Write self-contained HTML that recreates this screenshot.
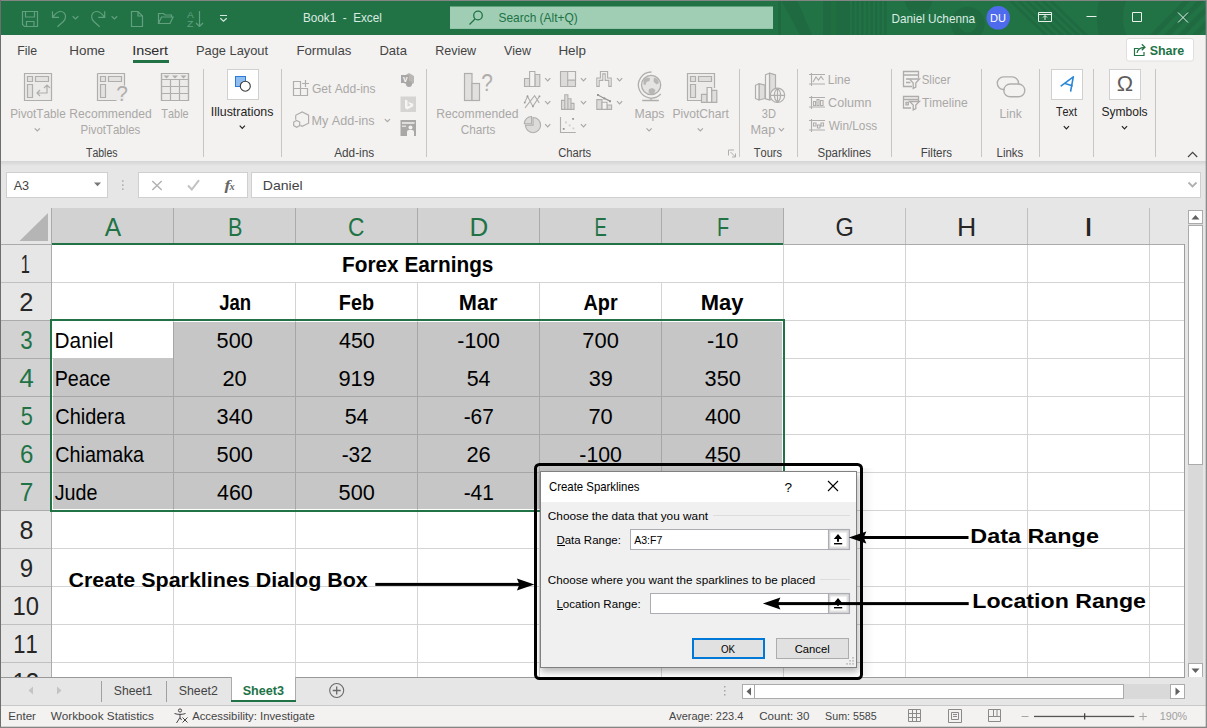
<!DOCTYPE html>
<html lang="en"><head><meta charset="utf-8"><title>Book1 - Excel</title>
<style>
html,body{margin:0;padding:0;background:#e6e6e6;overflow:hidden}
body{width:1207px;height:728px;position:relative;font-family:'Liberation Sans', 'DejaVu Sans', sans-serif}
svg{position:absolute;left:0;top:0;display:block;font-family:'Liberation Sans', 'DejaVu Sans', sans-serif}
text{white-space:pre;font-kerning:none}
</style></head><body>
<svg width="1207" height="728" viewBox="0 0 1207 728">
<rect x="0" y="0" width="1207" height="728" fill="#e6e6e6" />
<rect x="0" y="0" width="1207" height="35" fill="#217346" />
<clipPath id="tc"><rect x="0" y="0" width="1207" height="35"/></clipPath>
<g clip-path="url(#tc)" fill="#1f6a41" stroke="none">
<rect x="778" y="0" width="3" height="35" fill="#1f6a41" />
<path d="M781 0h16l15 35h-12z" />
<rect x="823" y="0" width="27" height="35" fill="#1f6a41" />
<rect x="831" y="0" width="5" height="35" fill="#20703f" />
<rect x="852.0" y="0" width="2.4" height="35" fill="#1f6a41" />
<rect x="856.6" y="0" width="2.4" height="35" fill="#1f6a41" />
<rect x="861.2" y="0" width="2.4" height="35" fill="#1f6a41" />
<rect x="865.8" y="0" width="2.4" height="35" fill="#1f6a41" />
<rect x="870.4" y="0" width="2.4" height="35" fill="#1f6a41" />
<rect x="875.0" y="0" width="2.4" height="35" fill="#1f6a41" />
<rect x="879.6" y="0" width="2.4" height="35" fill="#1f6a41" />
<rect x="884.2" y="0" width="2.4" height="35" fill="#1f6a41" />
<circle cx="918.6" cy="0" r="13.7"/>
<circle cx="967.8" cy="23.7" r="13" fill="none" stroke="#1f6a41" stroke-width="8"/>
<path d="M1008 0h4l36 35h-4z" />
<path d="M1016 0h4l36 35h-4z" />
<path d="M1024 0h4l36 35h-4z" />
<path d="M1032 0h4l36 35h-4z" />
<path d="M1040 0h4l36 35h-4z" />
<path d="M1048 0h4l36 35h-4z" />
<circle cx="1168" cy="18" r="58" fill="none" stroke="#1f6a41" stroke-width="26"/>
<path d="M1150 35h7l34-35h-7z" fill="#1f6a41" />
<path d="M1164 35h7l34-35h-7z" fill="#1f6a41" />
<path d="M1178 35h7l34-35h-7z" fill="#1f6a41" />
<path d="M1192 35h7l34-35h-7z" fill="#1f6a41" />
<path d="M1206 35h7l34-35h-7z" fill="#1f6a41" />
</g>
<rect x="0" y="35" width="1207" height="126" fill="#f3f2f1" />
<defs><linearGradient id="rs" x1="0" y1="0" x2="0" y2="1"><stop offset="0" stop-color="#d4d4d4"/><stop offset="1" stop-color="#e6e6e6"/></linearGradient></defs>
<rect x="0" y="161" width="1207" height="5" fill="url(#rs)" />
<g fill="none" stroke="#62a07e" stroke-width="1.2">
<path d="M22.5 11.5h15v15h-13l-2-2z M25.5 11.5v5.5h9v-5.5 M26.5 26.5v-5h7.5v5" />
<path d="M52.5 11.2v6.2h6.5 M52.8 17.2c2.3-3.4 5.2-5.7 7.9-5.7a4.9 4.9 0 0 1 4.8 5.4c0 1.9-0.9 3.4-2.4 4.8l-5.6 5" />
<path d="M72.7 16.3l2.8 2.7 2.8-2.7" />
<path d="M104.7 11.2v6.2h-6.5 M104.4 17.2c-2.3-3.4-5.2-5.7-7.9-5.7a4.9 4.9 0 0 0 -4.8 5.4c0 1.9 0.9 3.4 2.4 4.8l5.6 5" />
<path d="M111.6 16.3l2.8 2.7 2.8-2.7" />
<path d="M131.5 11.5h6.5l4.5 4.5v10.5h-11z M138 11.5v4.5h4.5" />
<path d="M158.5 23.5v-10h5l1.5 1.5h6.5v2.5 M158.5 23.5l3-6.5h11.5l-3 6.5z" />
<path d="M199.5 11v15.5 M196 23l3.5 3.5 3.5-3.5" />
</g>
<text x="187.08" y="17.7" font-size="9.4" fill="#62a07e" textLength="6.74" lengthAdjust="spacingAndGlyphs" >A</text>
<text x="186.97" y="26.8" font-size="9.4" fill="#62a07e" textLength="6.36" lengthAdjust="spacingAndGlyphs" >Z</text>
<g fill="none" stroke="#d5e8dd" stroke-width="1.2">
<path d="M220 15.5h7 M220.3 18.3l3.2 2.9 3.2-2.9" />
</g>
<text x="303.04" y="22" font-size="13" fill="#dcebe2" textLength="78.74" lengthAdjust="spacingAndGlyphs" >Book1  -  Excel</text>
<rect x="450" y="6.5" width="323" height="22.4" fill="#9fceb4" />
<g fill="none" stroke="#217346" stroke-width="1.3">
<circle cx="478" cy="15.5" r="4.3"/>
<path d="M475 19l-5.5 5.5" />
</g>
<text x="498.46" y="22" font-size="13" fill="#217346" textLength="79.28" lengthAdjust="spacingAndGlyphs" >Search (Alt+Q)</text>
<text x="891.54" y="22.5" font-size="13" fill="#dcebe2" textLength="83.46" lengthAdjust="spacingAndGlyphs" >Daniel Uchenna</text>
<circle cx="998.2" cy="17.8" r="11.8" fill="#4f6bed"/>
<text x="990.09" y="22" font-size="10.6" fill="#ffffff" textLength="15.96" lengthAdjust="spacingAndGlyphs" >DU</text>
<g fill="none" stroke="#fff" stroke-width="1" opacity="0.9">
<path d="M1038.5 12.5h13v9h-13z M1038.5 14.5h13 M1045 20v-4 M1043 17.5l2-2 2 2" />
<path d="M1086.5 16.5h10" />
<path d="M1132.5 12.5h9v9h-9z" />
<path d="M1178 12.5l10 10 M1188 12.5l-10 10" />
</g>
<text x="17.19" y="55" font-size="12.9" fill="#444444" textLength="19.86" lengthAdjust="spacingAndGlyphs" >File</text>
<text x="69.2" y="55" font-size="12.9" fill="#444444" textLength="35.9" lengthAdjust="spacingAndGlyphs" >Home</text>
<text x="132.17" y="55" font-size="12.9" fill="#2b2b2b" textLength="35.93" lengthAdjust="spacingAndGlyphs" >Insert</text>
<text x="195.95" y="55" font-size="12.9" fill="#444444" textLength="72.15" lengthAdjust="spacingAndGlyphs" >Page Layout</text>
<text x="296.42" y="55" font-size="12.9" fill="#444444" textLength="55.06" lengthAdjust="spacingAndGlyphs" >Formulas</text>
<text x="379.43" y="55" font-size="12.9" fill="#444444" textLength="27.57" lengthAdjust="spacingAndGlyphs" >Data</text>
<text x="435.17" y="55" font-size="12.9" fill="#444444" textLength="41.0" lengthAdjust="spacingAndGlyphs" >Review</text>
<text x="503.95" y="55" font-size="12.9" fill="#444444" textLength="27.02" lengthAdjust="spacingAndGlyphs" >View</text>
<text x="558.4" y="55" font-size="12.9" fill="#444444" textLength="27.67" lengthAdjust="spacingAndGlyphs" >Help</text>
<rect x="133" y="60" width="36" height="3" fill="#217346" />
<rect x="1126.5" y="38.5" width="67" height="22.5" fill="#fff" stroke="#e1dfdd" stroke-width="1" rx="2.5" />
<g fill="none" stroke="#217346" stroke-width="1.2">
<path d="M1138.5 48.5h-4v7h9.5v-3.5 M1137 53c0.5-3.5 3-5.5 7.5-5.7 M1141.8 44.3l3.2 3-3.2 3" />
</g>
<text x="1149.64" y="55.1" font-size="13.2" fill="#217346" font-weight="700" textLength="34.58" lengthAdjust="spacingAndGlyphs" >Share</text>
<rect x="203" y="69" width="1" height="88" fill="#c8c6c4" />
<rect x="281" y="69" width="1" height="88" fill="#c8c6c4" />
<rect x="426" y="69" width="1" height="88" fill="#c8c6c4" />
<rect x="739" y="69" width="1" height="88" fill="#c8c6c4" />
<rect x="797" y="69" width="1" height="88" fill="#c8c6c4" />
<rect x="891" y="69" width="1" height="88" fill="#c8c6c4" />
<rect x="981" y="69" width="1" height="88" fill="#c8c6c4" />
<rect x="1039" y="69" width="1" height="88" fill="#c8c6c4" />
<rect x="1093" y="69" width="1" height="88" fill="#c8c6c4" />
<rect x="1155" y="69" width="1" height="88" fill="#c8c6c4" />
<text x="85.96" y="157" font-size="12.3" fill="#444444" textLength="31.62" lengthAdjust="spacingAndGlyphs" >Tables</text>
<text x="334.18" y="157" font-size="12.3" fill="#444444" textLength="39.95" lengthAdjust="spacingAndGlyphs" >Add-ins</text>
<text x="558.13" y="157" font-size="12.3" fill="#444444" textLength="32.97" lengthAdjust="spacingAndGlyphs" >Charts</text>
<text x="753.75" y="157" font-size="12.3" fill="#444444" textLength="28.25" lengthAdjust="spacingAndGlyphs" >Tours</text>
<text x="817.48" y="157" font-size="12.3" fill="#444444" textLength="53.64" lengthAdjust="spacingAndGlyphs" >Sparklines</text>
<text x="920.75" y="157" font-size="12.3" fill="#444444" textLength="31.36" lengthAdjust="spacingAndGlyphs" >Filters</text>
<text x="996.56" y="157" font-size="12.3" fill="#444444" textLength="26.65" lengthAdjust="spacingAndGlyphs" >Links</text>
<text x="10.24" y="117.7" font-size="12.1" fill="#aaa8a6" textLength="55.49" lengthAdjust="spacingAndGlyphs" >PivotTable</text>
<path d="M34.699999999999996 128.29999999999998l2.6 2.6 2.6 -2.6" stroke="#aaa8a6" fill="none" stroke-width="1.2" />
<text x="69.3" y="117.7" font-size="12.1" fill="#aaa8a6" textLength="82.38" lengthAdjust="spacingAndGlyphs" >Recommended</text>
<text x="80.56" y="133.5" font-size="12.1" fill="#aaa8a6" textLength="59.75" lengthAdjust="spacingAndGlyphs" >PivotTables</text>
<text x="161.35" y="117.7" font-size="12.1" fill="#aaa8a6" textLength="27.33" lengthAdjust="spacingAndGlyphs" >Table</text>
<g fill="none" stroke="#b0aeac" stroke-width="1.2">
<path d="M24.5 73.5h27v27h-27z" fill="#ecebea" />
<path d="M27.5 76.5h5v5h-5z M35.5 76.5h13v5h-13z M27.5 84.5h5v13h-5z" fill="#e4e2e0" />
<path d="M47 85v8h-10 M40 90l-3 3 3 3 M44 88l3-3 3 3" />
<path d="M97.5 73.5h27v27h-27z" stroke="none" fill="#ecebea" />
<path d="M97.5 73.5h27v12 M97.5 73.5v27h19" />
<path d="M100.5 76.5h5v5h-5z M108.5 76.5h13v5h-13z M100.5 84.5h5v13h-5z" fill="#e4e2e0" />
<path d="M161.5 73.5h27v27h-27z" fill="#ecebea" />
<path d="M161.5 73.5h27v27h-27z M161.5 79.5h27 M161.5 86.5h27 M161.5 93.5h27 M170.5 79.5v21 M179.5 79.5v21" />
</g>
<path d="M163.5 75.5h6l-3 3z M172 75.5h6l-3 3z M180.5 75.5h6l-3 3z" fill="#b0aeac" />
<text x="116.14" y="101" font-size="22" fill="#b0aeac" textLength="11.63" lengthAdjust="spacingAndGlyphs" >?</text>
<rect x="227.5" y="69.5" width="31" height="30" fill="#ffffff" stroke="#d2d0ce" stroke-width="1" />
<rect x="235.5" y="76.5" width="10" height="10" fill="#8fbdf0" stroke="#2b7bd6" stroke-width="1" />
<circle cx="245.3" cy="86.2" r="5" fill="#fff" stroke="#3b3a39" stroke-width="1.1"/>
<text x="210.86" y="116" font-size="12.1" fill="#252423" textLength="62.59" lengthAdjust="spacingAndGlyphs" >Illustrations</text>
<path d="M239.70000000000002 125.7l2.6 2.6 2.6 -2.6" stroke="#252423" fill="none" stroke-width="1.2" />
<g fill="none" stroke="#b0aeac" stroke-width="1.2">
<path d="M293.5 81.5h7v7h7v7h-14z M300.5 88.5v7 M293.5 88.5h7 M305.5 80v7 M302 83.5h7" />
<path d="M295.7 115.2l6.5-3.2 6.4 3.2v8l-6.4 3.1-1.8-0.9 M295.7 115.2v4.6" />
<path d="M296.7 120.4l3 1.7v3.5l-3 1.7-3-1.7v-3.5z" />
</g>
<text x="311.89" y="92.7" font-size="12.1" fill="#aaa8a6" textLength="63.74" lengthAdjust="spacingAndGlyphs" >Get Add-ins</text>
<text x="311.46" y="124.8" font-size="12.1" fill="#aaa8a6" textLength="63.19" lengthAdjust="spacingAndGlyphs" >My Add-ins</text>
<path d="M384.79999999999995 119.10000000000001l2.6 2.6 2.6 -2.6" stroke="#aaa8a6" fill="none" stroke-width="1.2" />
<path d="M404 76l5-3 5 3v7l-5 3-5-3z" fill="#b9b7b5" />
<circle cx="409" cy="84" r="3" fill="#a9a7a5"/>
<rect x="401" y="75" width="8" height="8" fill="#a9a7a5" />
<text x="402.95" y="82" font-size="7" fill="#fff" font-weight="700" textLength="4.59" lengthAdjust="spacingAndGlyphs" >V</text>
<rect x="400.5" y="96.5" width="15.5" height="15.5" fill="#d6d4d2" />
<path d="M405 99.5l2.5 1v6l3.5-1.5-2-1 -0.8-2 5 1.8v2.5l-6 3.2-2.2-1.5z" fill="#f6f5f4" />
<rect x="400.5" y="120" width="15.5" height="16" fill="#aaa8a6" />
<rect x="402" y="122" width="12.5" height="2" fill="#e0dedc" />
<rect x="402" y="125.5" width="4" height="1.5" fill="#e0dedc" />
<circle cx="410.5" cy="127.5" r="2" fill="#f3f2f1"/>
<path d="M407 136v-4a2 2 0 0 1 2-2h3a2 2 0 0 1 2 2v4z" fill="#f3f2f1" />
<rect x="464.5" y="73.5" width="7.5" height="27" fill="#e2e0de" stroke="#b0aeac" stroke-width="1.2" />
<rect x="472" y="83.5" width="7.5" height="17" fill="#e2e0de" stroke="#b0aeac" stroke-width="1.2" />
<text x="481.14" y="91" font-size="24" fill="#b0aeac" textLength="11.63" lengthAdjust="spacingAndGlyphs" >?</text>
<text x="436.31" y="117.7" font-size="12.1" fill="#aaa8a6" textLength="82.07" lengthAdjust="spacingAndGlyphs" >Recommended</text>
<text x="460.8" y="133.5" font-size="12.1" fill="#aaa8a6" textLength="34.62" lengthAdjust="spacingAndGlyphs" >Charts</text>
<g fill="#dddbd9" stroke="#b0aeac" stroke-width="1.1">
<path d="M524.5 86.5v-8h5v8z M534.9 86.5v-12h4.9v12z" />
<path d="M529.6 86.5v-15h5.3v15z" fill="#f3f2f1" />
<path d="M525 107.8L534.6 95.6L539.2 102.9 M524.7 102.6L527.5 96.3L532.9 106.4L539.5 96.3" fill="none" />
<path d="M533 117.5a7.6 7.6 0 1 1 -7.6 7.6h7.6z" />
<path d="M531.6 123.8h-7.3a7.4 7.4 0 0 1 7.3-7.3z" />
<path d="M560.5 71.5h15v15h-15z" />
<path d="M567.7 71.5h7.8v8.6h-7.8z" fill="#efedeb" />
<path d="M567.7 80v6.5" fill="none" />
<path d="M561.5 109.4v-9h3.3v9z M564.8 109.4v-14.6h3.1v14.6z M567.9 109.4v-10.7h3.1v10.7z M571 109.4v-6h3v6z" />
<path d="M560.5 117v15.5h15.3" fill="none" />
<path d="M596.8 86.4v-8.4h3.6v-6.5h7.2v6.5h3.6v8.4h-2.4v-6h-3.6v-6.5h-2.4v6.5h-3.6v6z" fill="#efedeb" />
<path d="M596.8 109.4v-9.8h5.2v9.8z M607 109.4v-4.4h4.6v4.4z" />
<path d="M602 109.4v-7.2h5v7.2z" fill="#f3f2f1" />
<path d="M598 95l6 3.2 6 3" stroke="#9a9896" fill="none" stroke-width="1.3" />
</g>
<rect x="572.2" y="118" width="1.8" height="1.8" fill="#9a9896" />
<rect x="562.8" y="128" width="1.8" height="1.8" fill="#9a9896" />
<rect x="565" y="121.5" width="1.8" height="1.8" fill="#d0cecc" />
<rect x="568.8" y="124.5" width="1.8" height="1.8" fill="#d0cecc" />
<rect x="572.5" y="127.5" width="1.8" height="1.8" fill="#d0cecc" />
<rect x="597" y="94" width="2" height="2" fill="#9a9896" />
<rect x="603.2" y="97.4" width="2" height="2" fill="#9a9896" />
<rect x="609" y="100.2" width="2" height="2" fill="#9a9896" />
<rect x="523.9" y="101.8" width="1.6" height="1.6" fill="#9a9896" />
<rect x="526.7" y="95.5" width="1.6" height="1.6" fill="#9a9896" />
<rect x="532.1" y="105.6" width="1.6" height="1.6" fill="#9a9896" />
<rect x="538.7" y="95.5" width="1.6" height="1.6" fill="#9a9896" />
<path d="M545.1 78.2l2.6 2.6 2.6 -2.6" stroke="#aaa8a6" fill="none" stroke-width="1.2" />
<path d="M545.1 101.2l2.6 2.6 2.6 -2.6" stroke="#aaa8a6" fill="none" stroke-width="1.2" />
<path d="M545.1 124.2l2.6 2.6 2.6 -2.6" stroke="#aaa8a6" fill="none" stroke-width="1.2" />
<path d="M580.9 78.2l2.6 2.6 2.6 -2.6" stroke="#aaa8a6" fill="none" stroke-width="1.2" />
<path d="M580.9 101.2l2.6 2.6 2.6 -2.6" stroke="#aaa8a6" fill="none" stroke-width="1.2" />
<path d="M580.9 124.2l2.6 2.6 2.6 -2.6" stroke="#aaa8a6" fill="none" stroke-width="1.2" />
<path d="M617.0 78.2l2.6 2.6 2.6 -2.6" stroke="#aaa8a6" fill="none" stroke-width="1.2" />
<path d="M617.0 101.2l2.6 2.6 2.6 -2.6" stroke="#aaa8a6" fill="none" stroke-width="1.2" />
<g fill="none" stroke="#b0aeac" stroke-width="1.3">
<circle cx="651.1" cy="85" r="9.6" fill="#e6e4e2"/>
<path d="M651.5 72a13 13 0 1 0 9.3 22 M651 97.5v3 M642.2 100.5h16.6" />
</g>
<path d="M643.5 80l3-2.5 3.5 0.5-0.5 3-3 1-1 3-2-0.5z M649 89l3.5-1 3 2-1.5 4-3.5 0.5-2-2.5z M654 77.5l3.5 1.5 1.5 4-2.5 1.5-3-3z" fill="#b9b7b5" />
<text x="634.5" y="117.7" font-size="12.1" fill="#aaa8a6" textLength="29.95" lengthAdjust="spacingAndGlyphs" >Maps</text>
<path d="M646.5 128.29999999999998l2.6 2.6 2.6 -2.6" stroke="#aaa8a6" fill="none" stroke-width="1.2" />
<g fill="none" stroke="#b0aeac" stroke-width="1.2">
<path d="M714.5 73.5h-27v27h27z" stroke="none" fill="#ecebea" />
<path d="M714.5 88v-14.5h-27v27h13.5" />
<path d="M690.5 76.5h5v5h-5z M698.5 76.5h13v5h-13z M690.5 84.5h5v13h-5z" fill="#e0dedc" />
<path d="M701.5 102.3v-8h5.6v8z M711.6 102.3v-12h5.2v12z" fill="#e0dedc" />
<path d="M707.1 102.3v-14.8h4.5v14.8z" fill="#f3f2f1" />
</g>
<text x="672.51" y="117.7" font-size="12.1" fill="#aaa8a6" textLength="56.28" lengthAdjust="spacingAndGlyphs" >PivotChart</text>
<path d="M697.6999999999999 128.29999999999998l2.6 2.6 2.6 -2.6" stroke="#aaa8a6" fill="none" stroke-width="1.2" />
<path d="M728.5 155.5v-5.5h5.5 M730.5 152l5 5 M735.5 153.5v3.5h-3.5" stroke="#b0aeac" fill="none" stroke-width="1" />
<g fill="#e0dedc" stroke="#b0aeac" stroke-width="1.2" stroke-linejoin="round">
<path d="M759 83.7L765 85.2V98.5L759 100Z" />
<path d="M755.5 85.2L759 83.7V100L755.5 98.5Z" fill="#f3f2f1" />
<path d="M769.5 73.2L775.5 74.8V99L769.5 99.8Z" />
<path d="M765.5 74.8L769.5 73.2V99.8L765.5 98.8Z" fill="#f3f2f1" />
<circle cx="777.5" cy="95.3" r="7.2" fill="#f3f2f1"/>
<path d="M770.3 95.3h14.4 M777.5 88.1v14.4 M777.5 88.1c-4.2 4-4.2 10.4 0 14.4 M777.5 88.1c4.2 4 4.2 10.4 0 14.4" fill="none" />
</g>
<text x="761.78" y="117.7" font-size="12.1" fill="#aaa8a6" textLength="14.15" lengthAdjust="spacingAndGlyphs" >3D</text>
<text x="750.46" y="133.5" font-size="12.1" fill="#aaa8a6" textLength="24.78" lengthAdjust="spacingAndGlyphs" >Map</text>
<path d="M778.8 128.2l2.6 2.6 2.6 -2.6" stroke="#aaa8a6" fill="none" stroke-width="1.2" />
<g fill="none" stroke="#b0aeac" stroke-width="1.1">
<path d="M811.5 73v13 M809 74.5h16 M809 84h16" />
<path d="M811.5 96v13 M809 97.5h16 M809 107h16" />
<path d="M811.5 119v13 M809 120.5h16 M809 130h16" />
<path d="M813 82l3-5 2.5 3 2.5-3.5 2.5 3.5" />
<path d="M813.5 105.5v-4h2v4z M817 105.5v-6h2v6z M820.5 105.5v-5h2.5v5z" />
<path d="M813.5 126v-3h2.5v3z M817.5 128v-3h2.5v3z M821 126v-3h2.5v3z" />
</g>
<text x="827.7" y="83.8" font-size="12.1" fill="#aaa8a6" textLength="22.93" lengthAdjust="spacingAndGlyphs" >Line</text>
<text x="828.06" y="106.6" font-size="12.1" fill="#aaa8a6" textLength="43.36" lengthAdjust="spacingAndGlyphs" >Column</text>
<text x="828.65" y="129.6" font-size="12.1" fill="#aaa8a6" textLength="48.58" lengthAdjust="spacingAndGlyphs" >Win/Loss</text>
<g fill="none" stroke="#aeacaa" stroke-width="1.3">
<path d="M903.5 71.5h15v3.5h-15z M903.5 75v11.5h8.5 M918.5 75v3" />
<path d="M909.5 79h10l-3.7 4v4.2l-2.6 1.2v-5.4z" fill="#f3f2f1" />
<path d="M906 79h3 M906 82.5h4.5" />
<path d="M903.5 96.5h15v3h-15z M903.5 99.5v8.5h7.5 M918.5 99.5v2" />
<path d="M909.5 101.5h10l-3.7 3.6v3.6l-2.6 1.2v-4.8z" fill="#f3f2f1" />
<path d="M906 102.5h2.3v2.3h-2.3z" />
</g>
<text x="921.68" y="83.8" font-size="12.1" fill="#aaa8a6" textLength="28.81" lengthAdjust="spacingAndGlyphs" >Slicer</text>
<text x="921.93" y="106.6" font-size="12.1" fill="#aaa8a6" textLength="45.81" lengthAdjust="spacingAndGlyphs" >Timeline</text>
<g fill="none" stroke="#b0aeac" stroke-width="1.4">
<path d="M1003.6 89.5A6.3 6.3 0 0 1 1003.6 76.9H1012.2A6.3 6.3 0 0 1 1018.5 83.2V84.5 M1003.6 89.5h1.2" />
<path d="M1018.4 84H1010.2A6.4 6.4 0 0 0 1010.2 96.8H1018.4A6.4 6.4 0 0 0 1018.4 84" />
</g>
<text x="999.5" y="117.7" font-size="12.1" fill="#aaa8a6" textLength="22.28" lengthAdjust="spacingAndGlyphs" >Link</text>
<rect x="1051.5" y="69.5" width="31" height="30" fill="#ffffff" stroke="#d2d0ce" stroke-width="1" />
<path d="M1061.2 85.8L1073.3 76.8L1070.7 91 M1065 83.5l7.2 2.2" stroke="#2b88d8" fill="none" stroke-width="1.6" stroke-linecap="round" stroke-linejoin="round"/>
<text x="1055.96" y="115.6" font-size="12.1" fill="#252423" textLength="21.12" lengthAdjust="spacingAndGlyphs" >Text</text>
<path d="M1063.8000000000002 126.2l2.6 2.6 2.6 -2.6" stroke="#252423" fill="none" stroke-width="1.2" />
<rect x="1109.5" y="69.5" width="31" height="30" fill="#ffffff" stroke="#d2d0ce" stroke-width="1" />
<text x="1116.77" y="90.9" font-size="21.2" fill="#605e5c" textLength="16.37" lengthAdjust="spacingAndGlyphs" >Ω</text>
<text x="1101.45" y="115.6" font-size="12.1" fill="#252423" textLength="46.18" lengthAdjust="spacingAndGlyphs" >Symbols</text>
<path d="M1121.9 126.2l2.6 2.6 2.6 -2.6" stroke="#252423" fill="none" stroke-width="1.2" />
<path d="M1188 157l4.6-4.6 4.6 4.6" stroke="#444" fill="none" stroke-width="1.2" />
<rect x="6.5" y="172.5" width="101" height="25" fill="#ffffff" stroke="#cfcfcf" stroke-width="1" />
<text x="13.68" y="189.8" font-size="12.9" fill="#444" textLength="15.48" lengthAdjust="spacingAndGlyphs" >A3</text>
<path d="M94 182.5h7l-3.5 3.8z" fill="#777" />
<rect x="122" y="180.2" width="1.6" height="1.6" fill="#b0b0b0" />
<rect x="122" y="184.3" width="1.6" height="1.6" fill="#b0b0b0" />
<rect x="122" y="188.4" width="1.6" height="1.6" fill="#b0b0b0" />
<rect x="138.5" y="172.5" width="109" height="25" fill="#ffffff" stroke="#cfcfcf" stroke-width="1" />
<path d="M152.3 181l9.4 9 M161.7 181l-9.4 9" stroke="#b4b4b4" fill="none" stroke-width="1.6" />
<path d="M188 185.5l3.8 4 7.2-9.3" stroke="#c2c2c2" fill="none" stroke-width="2" />
<text x="224.5" y="189.5" font-size="15" fill="#666" font-weight="700" textLength="6" lengthAdjust="spacingAndGlyphs" font-style="italic" font-family="Liberation Serif, DejaVu Serif, serif">f</text>
<text x="229.5" y="190" font-size="9.5" fill="#666" font-weight="700" textLength="5.2" lengthAdjust="spacingAndGlyphs" font-style="italic" font-family="Liberation Serif, DejaVu Serif, serif">x</text>
<rect x="251.5" y="172.5" width="949" height="25" fill="#ffffff" stroke="#cfcfcf" stroke-width="1" />
<text x="262.75" y="189.9" font-size="12.9" fill="#444" textLength="39.9" lengthAdjust="spacingAndGlyphs" >Daniel</text>
<path d="M1188.5 182.5l4 4 4-4" stroke="#b0b0b0" fill="none" stroke-width="1.8" />
<rect x="52" y="244" width="1133" height="433" fill="#ffffff" />
<rect x="0" y="208" width="1185" height="36" fill="#e6e6e6" />
<rect x="52" y="208" width="731" height="36" fill="#d2d2d2" />
<path d="M48 213v28h-28.5z" fill="#b5b5b5" />
<rect x="0" y="244" width="51" height="433" fill="#e6e6e6" />
<rect x="0" y="321" width="51" height="189" fill="#d2d2d2" />
<rect x="52" y="282" width="1133" height="1" fill="#d4d4d4" />
<rect x="52" y="320" width="1133" height="1" fill="#d4d4d4" />
<rect x="52" y="358" width="1133" height="1" fill="#d4d4d4" />
<rect x="52" y="396" width="1133" height="1" fill="#d4d4d4" />
<rect x="52" y="434" width="1133" height="1" fill="#d4d4d4" />
<rect x="52" y="472" width="1133" height="1" fill="#d4d4d4" />
<rect x="52" y="510" width="1133" height="1" fill="#d4d4d4" />
<rect x="52" y="548" width="1133" height="1" fill="#d4d4d4" />
<rect x="52" y="586" width="1133" height="1" fill="#d4d4d4" />
<rect x="52" y="624" width="1133" height="1" fill="#d4d4d4" />
<rect x="52" y="662" width="1133" height="1" fill="#d4d4d4" />
<rect x="173" y="245" width="1" height="432" fill="#d4d4d4" />
<rect x="295" y="245" width="1" height="432" fill="#d4d4d4" />
<rect x="417" y="245" width="1" height="432" fill="#d4d4d4" />
<rect x="539" y="245" width="1" height="432" fill="#d4d4d4" />
<rect x="661" y="245" width="1" height="432" fill="#d4d4d4" />
<rect x="783" y="245" width="1" height="432" fill="#d4d4d4" />
<rect x="905" y="245" width="1" height="432" fill="#d4d4d4" />
<rect x="1027" y="245" width="1" height="432" fill="#d4d4d4" />
<rect x="1149" y="245" width="1" height="432" fill="#d4d4d4" />
<rect x="52" y="245" width="731" height="37" fill="#ffffff" />
<rect x="53" y="322" width="729" height="187" fill="#c6c6c6" />
<rect x="53" y="396" width="729" height="1" fill="#a6a6a6" />
<rect x="53" y="434" width="729" height="1" fill="#a6a6a6" />
<rect x="53" y="472" width="729" height="1" fill="#a6a6a6" />
<rect x="173" y="322" width="1" height="187" fill="#a6a6a6" />
<rect x="295" y="322" width="1" height="187" fill="#a6a6a6" />
<rect x="417" y="322" width="1" height="187" fill="#a6a6a6" />
<rect x="539" y="322" width="1" height="187" fill="#a6a6a6" />
<rect x="661" y="322" width="1" height="187" fill="#a6a6a6" />
<rect x="53" y="322" width="120" height="36" fill="#ffffff" />
<rect x="173" y="208" width="1" height="36" fill="#ababab" />
<rect x="295" y="208" width="1" height="36" fill="#ababab" />
<rect x="417" y="208" width="1" height="36" fill="#ababab" />
<rect x="539" y="208" width="1" height="36" fill="#ababab" />
<rect x="661" y="208" width="1" height="36" fill="#ababab" />
<rect x="783" y="208" width="1" height="36" fill="#ababab" />
<rect x="905" y="208" width="1" height="36" fill="#c0c0c0" />
<rect x="1027" y="208" width="1" height="36" fill="#c0c0c0" />
<rect x="1149" y="208" width="1" height="36" fill="#c0c0c0" />
<rect x="51" y="208" width="1" height="469" fill="#ababab" />
<rect x="0" y="244" width="51" height="1" fill="#c0c0c0" />
<rect x="0" y="282" width="51" height="1" fill="#c0c0c0" />
<rect x="0" y="320" width="51" height="1" fill="#ababab" />
<rect x="0" y="358" width="51" height="1" fill="#ababab" />
<rect x="0" y="396" width="51" height="1" fill="#ababab" />
<rect x="0" y="434" width="51" height="1" fill="#ababab" />
<rect x="0" y="472" width="51" height="1" fill="#ababab" />
<rect x="0" y="510" width="51" height="1" fill="#ababab" />
<rect x="0" y="548" width="51" height="1" fill="#c0c0c0" />
<rect x="0" y="586" width="51" height="1" fill="#c0c0c0" />
<rect x="0" y="624" width="51" height="1" fill="#c0c0c0" />
<rect x="0" y="662" width="51" height="1" fill="#c0c0c0" />
<rect x="0" y="244" width="1185" height="1" fill="#ababab" />
<rect x="1184" y="244" width="1" height="433" fill="#9e9e9e" />
<rect x="52" y="243" width="731" height="2" fill="#217346" />
<rect x="51" y="320" width="733" height="191" fill="none" stroke="#217346" stroke-width="2" />
<text x="104.75" y="236" font-size="26.5" fill="#217346" textLength="16.4" lengthAdjust="spacingAndGlyphs" >A</text>
<text x="228.03" y="236" font-size="26.5" fill="#217346" textLength="14.41" lengthAdjust="spacingAndGlyphs" >B</text>
<text x="347.95" y="236" font-size="26.5" fill="#217346" textLength="16.42" lengthAdjust="spacingAndGlyphs" >C</text>
<text x="469.57" y="236" font-size="26.5" fill="#217346" textLength="18.78" lengthAdjust="spacingAndGlyphs" >D</text>
<text x="594.49" y="236" font-size="26.5" fill="#217346" textLength="12.31" lengthAdjust="spacingAndGlyphs" >E</text>
<text x="716.97" y="236" font-size="26.5" fill="#217346" textLength="12.12" lengthAdjust="spacingAndGlyphs" >F</text>
<text x="835.41" y="236" font-size="26.5" fill="#262626" textLength="18.35" lengthAdjust="spacingAndGlyphs" >G</text>
<text x="957.01" y="236" font-size="26.5" fill="#262626" textLength="19.26" lengthAdjust="spacingAndGlyphs" >H</text>
<text x="1083.73" y="236" font-size="26.5" fill="#262626" textLength="9.53" lengthAdjust="spacingAndGlyphs" >I</text>
<clipPath id="gc"><rect x="0" y="245" width="1185" height="432"/></clipPath>
<g clip-path="url(#gc)">
<text x="20.65" y="273" font-size="26.5" fill="#262626" textLength="9.16" lengthAdjust="spacingAndGlyphs" >1</text>
<text x="19.32" y="311" font-size="26.5" fill="#262626" textLength="14.16" lengthAdjust="spacingAndGlyphs" >2</text>
<text x="20.25" y="349" font-size="26.5" fill="#217346" textLength="12.43" lengthAdjust="spacingAndGlyphs" >3</text>
<text x="19.2" y="387" font-size="26.5" fill="#217346" textLength="14.57" lengthAdjust="spacingAndGlyphs" >4</text>
<text x="20.73" y="425" font-size="26.5" fill="#217346" textLength="12.08" lengthAdjust="spacingAndGlyphs" >5</text>
<text x="19.88" y="463" font-size="26.5" fill="#217346" textLength="13.38" lengthAdjust="spacingAndGlyphs" >6</text>
<text x="19.65" y="501" font-size="26.5" fill="#217346" textLength="13.58" lengthAdjust="spacingAndGlyphs" >7</text>
<text x="19.52" y="539" font-size="26.5" fill="#262626" textLength="13.87" lengthAdjust="spacingAndGlyphs" >8</text>
<text x="19.77" y="577" font-size="26.5" fill="#262626" textLength="13.36" lengthAdjust="spacingAndGlyphs" >9</text>
<text x="12.49" y="615" font-size="26.5" fill="#262626" textLength="26.44" lengthAdjust="spacingAndGlyphs" >10</text>
<text x="13.23" y="653" font-size="26.5" fill="#262626" textLength="24.45" lengthAdjust="spacingAndGlyphs" >11</text>
<text x="12.47" y="691" font-size="26.5" fill="#262626" textLength="26.74" lengthAdjust="spacingAndGlyphs" >12</text>
</g>
<text x="342.01" y="272" font-size="21.3" fill="#000" font-weight="700" textLength="151.44" lengthAdjust="spacingAndGlyphs" >Forex Earnings</text>
<text x="219.17" y="310" font-size="21.3" fill="#000" font-weight="700" textLength="31.93" lengthAdjust="spacingAndGlyphs" >Jan</text>
<text x="338.82" y="310" font-size="21.3" fill="#000" font-weight="700" textLength="35.24" lengthAdjust="spacingAndGlyphs" >Feb</text>
<text x="458.74" y="310" font-size="21.3" fill="#000" font-weight="700" textLength="38.79" lengthAdjust="spacingAndGlyphs" >Mar</text>
<text x="583.56" y="310" font-size="21.3" fill="#000" font-weight="700" textLength="34.09" lengthAdjust="spacingAndGlyphs" >Apr</text>
<text x="700.68" y="310" font-size="21.3" fill="#000" font-weight="700" textLength="42.69" lengthAdjust="spacingAndGlyphs" >May</text>
<text x="54.6" y="348" font-size="21.3" fill="#000" textLength="58.89" lengthAdjust="spacingAndGlyphs" >Daniel</text>
<text x="54.68" y="386" font-size="21.3" fill="#000" textLength="55.89" lengthAdjust="spacingAndGlyphs" >Peace</text>
<text x="55.29" y="424" font-size="21.3" fill="#000" textLength="69.81" lengthAdjust="spacingAndGlyphs" >Chidera</text>
<text x="55.3" y="462" font-size="21.3" fill="#000" textLength="88.8" lengthAdjust="spacingAndGlyphs" >Chiamaka</text>
<text x="54.69" y="500" font-size="21.3" fill="#000" textLength="42.78" lengthAdjust="spacingAndGlyphs" >Jude</text>
<text x="216.58" y="348" font-size="21.3" fill="#000" textLength="36.22" lengthAdjust="spacingAndGlyphs" >500</text>
<text x="338.96" y="348" font-size="21.3" fill="#000" textLength="35.83" lengthAdjust="spacingAndGlyphs" >450</text>
<text x="457.35" y="348" font-size="21.3" fill="#000" textLength="42.58" lengthAdjust="spacingAndGlyphs" >-100</text>
<text x="582.33" y="348" font-size="21.3" fill="#000" textLength="36.47" lengthAdjust="spacingAndGlyphs" >700</text>
<text x="706.93" y="348" font-size="21.3" fill="#000" textLength="31.41" lengthAdjust="spacingAndGlyphs" >-10</text>
<text x="222.45" y="386" font-size="21.3" fill="#000" textLength="24.25" lengthAdjust="spacingAndGlyphs" >20</text>
<text x="338.42" y="386" font-size="21.3" fill="#000" textLength="36.57" lengthAdjust="spacingAndGlyphs" >919</text>
<text x="466.69" y="386" font-size="21.3" fill="#000" textLength="23.78" lengthAdjust="spacingAndGlyphs" >54</text>
<text x="588.72" y="386" font-size="21.3" fill="#000" textLength="24.16" lengthAdjust="spacingAndGlyphs" >39</text>
<text x="704.62" y="386" font-size="21.3" fill="#000" textLength="36.17" lengthAdjust="spacingAndGlyphs" >350</text>
<text x="216.62" y="424" font-size="21.3" fill="#000" textLength="36.17" lengthAdjust="spacingAndGlyphs" >340</text>
<text x="344.69" y="424" font-size="21.3" fill="#000" textLength="23.78" lengthAdjust="spacingAndGlyphs" >54</text>
<text x="463.67" y="424" font-size="21.3" fill="#000" textLength="30.18" lengthAdjust="spacingAndGlyphs" >-67</text>
<text x="588.43" y="424" font-size="21.3" fill="#000" textLength="24.27" lengthAdjust="spacingAndGlyphs" >70</text>
<text x="704.96" y="424" font-size="21.3" fill="#000" textLength="35.83" lengthAdjust="spacingAndGlyphs" >400</text>
<text x="216.58" y="462" font-size="21.3" fill="#000" textLength="36.22" lengthAdjust="spacingAndGlyphs" >500</text>
<text x="341.67" y="462" font-size="21.3" fill="#000" textLength="30.18" lengthAdjust="spacingAndGlyphs" >-32</text>
<text x="466.45" y="462" font-size="21.3" fill="#000" textLength="24.36" lengthAdjust="spacingAndGlyphs" >26</text>
<text x="579.35" y="462" font-size="21.3" fill="#000" textLength="42.58" lengthAdjust="spacingAndGlyphs" >-100</text>
<text x="704.96" y="462" font-size="21.3" fill="#000" textLength="35.83" lengthAdjust="spacingAndGlyphs" >450</text>
<text x="216.96" y="500" font-size="21.3" fill="#000" textLength="35.83" lengthAdjust="spacingAndGlyphs" >460</text>
<text x="338.58" y="500" font-size="21.3" fill="#000" textLength="36.22" lengthAdjust="spacingAndGlyphs" >500</text>
<text x="463.67" y="500" font-size="21.3" fill="#000" textLength="30.15" lengthAdjust="spacingAndGlyphs" >-41</text>
<text x="589.06" y="500" font-size="21.3" fill="#000" textLength="23.73" lengthAdjust="spacingAndGlyphs" >43</text>
<text x="710.44" y="500" font-size="21.3" fill="#000" textLength="24.26" lengthAdjust="spacingAndGlyphs" >60</text>
<rect x="1185" y="208" width="22" height="469" fill="#e6e6e6" />
<rect x="1188" y="210" width="15" height="468" fill="#d9d9d9" />
<rect x="1188.5" y="210.5" width="14" height="13" fill="#ffffff" stroke="#ababab" stroke-width="1" />
<path d="M1191.5 219.5h8l-4-4.5z" fill="#606060" />
<rect x="1188.5" y="225.5" width="14" height="239" fill="#ffffff" stroke="#ababab" stroke-width="1" />
<rect x="1188.5" y="663.5" width="14" height="14" fill="#ffffff" stroke="#ababab" stroke-width="1" />
<path d="M1191.5 668.5h8l-4 4.5z" fill="#606060" />
<rect x="0" y="677" width="1207" height="28" fill="#e6e6e6" />
<rect x="0" y="677" width="1185" height="1" fill="#999999" />
<rect x="0" y="705" width="1207" height="1" fill="#c8c8c8" />
<rect x="231" y="677" width="65" height="24" fill="#ffffff" />
<rect x="231" y="677" width="1" height="25" fill="#ababab" />
<rect x="295" y="677" width="1" height="25" fill="#ababab" />
<rect x="231" y="700" width="65" height="2" fill="#217346" />
<rect x="101" y="681" width="1" height="21" fill="#a0a0a0" />
<rect x="166" y="681" width="1" height="21" fill="#a0a0a0" />
<path d="M33 686.5v8l-4.5-4z M57 686.5v8l4.5-4z" fill="#c4c4c4" />
<text x="113.75" y="694.6" font-size="13.3" fill="#444" textLength="38.65" lengthAdjust="spacingAndGlyphs" >Sheet1</text>
<text x="178.74" y="694.6" font-size="13.3" fill="#444" textLength="39.18" lengthAdjust="spacingAndGlyphs" >Sheet2</text>
<text x="242.64" y="694.6" font-size="13.3" fill="#217346" font-weight="700" textLength="41.32" lengthAdjust="spacingAndGlyphs" >Sheet3</text>
<circle cx="336.7" cy="690.5" r="7" fill="none" stroke="#6a6a6a" stroke-width="1.1"/>
<path d="M332.7 690.5h8 M336.7 686.5v8" stroke="#6a6a6a" fill="none" stroke-width="1.3" />
<rect x="724" y="686" width="1.5" height="1.5" fill="#a6a6a6" />
<rect x="724" y="690" width="1.5" height="1.5" fill="#a6a6a6" />
<rect x="724" y="694" width="1.5" height="1.5" fill="#a6a6a6" />
<rect x="742" y="684" width="442" height="15" fill="#d9d9d9" />
<rect x="742.5" y="684.5" width="12" height="14" fill="#ffffff" stroke="#ababab" stroke-width="1" />
<path d="M751 687.5v8l-4.5-4z" fill="#606060" />
<rect x="754.5" y="684.5" width="369" height="14" fill="#ffffff" stroke="#ababab" stroke-width="1" />
<rect x="1170.5" y="684.5" width="14" height="14" fill="#ffffff" stroke="#ababab" stroke-width="1" />
<path d="M1175.5 687.5v8l4.5-4z" fill="#606060" />
<rect x="0" y="706" width="1207" height="22" fill="#f3f2f1" />
<text x="8.35" y="720" font-size="11.5" fill="#444444" textLength="27.64" lengthAdjust="spacingAndGlyphs" >Enter</text>
<text x="50.65" y="720" font-size="11.5" fill="#444444" textLength="103.18" lengthAdjust="spacingAndGlyphs" >Workbook Statistics</text>
<g fill="none" stroke="#444" stroke-width="1">
<circle cx="180" cy="710.5" r="1.6"/>
<path d="M174.5 713.5c3 1.2 8 1.2 11 0 M180 714v3.5l-3.5 5.5 M180 717.5l1.5 2.5" />
<path d="M182.5 717.5l5 5 M187.5 717.5l-5 5" />
</g>
<text x="192.18" y="720" font-size="11.5" fill="#444444" textLength="122.52" lengthAdjust="spacingAndGlyphs" >Accessibility: Investigate</text>
<text x="668.98" y="720" font-size="11.5" fill="#444444" textLength="74.34" lengthAdjust="spacingAndGlyphs" >Average: 223.4</text>
<text x="759.21" y="720" font-size="11.5" fill="#444444" textLength="50.24" lengthAdjust="spacingAndGlyphs" >Count: 30</text>
<text x="825.12" y="720" font-size="11.5" fill="#444444" textLength="51.63" lengthAdjust="spacingAndGlyphs" >Sum: 5585</text>
<g fill="none" stroke="#8a8a8a" stroke-width="1">
<path d="M908.5 709.5h12v12h-12z M912.5 709.5v12 M916.5 709.5v12 M908.5 713.5h12 M908.5 717.5h12" />
<path d="M948.5 709.5h13v13h-13z M951.5 712.5h7v7h-7z M953 714.5h4 M953 716.5h4" />
<path d="M988.5 709.5h12v12h-12z M993.5 709.5v7h3.5v-7 M988.5 716.5h12" />
<path d="M1021.5 716.5h7 M1139.3 716.5h7.6 M1143.1 712.7v7.6" stroke="#a6a6a6" />
</g>
<rect x="1034" y="715.8" width="100.2" height="1.3" fill="#555" />
<rect x="1084" y="713.3" width="1.3" height="6.2" fill="#444" />
<text x="1159.68" y="720" font-size="11.5" fill="#a0a0a0" textLength="27.5" lengthAdjust="spacingAndGlyphs" >190%</text>
<defs><filter id="ds" x="-10%" y="-10%" width="125%" height="125%"><feGaussianBlur stdDeviation="3.5"/></filter><clipPath id="dc"><rect x="536" y="465" width="325" height="213.5" rx="3"/></clipPath></defs>
<g clip-path="url(#dc)">
<rect x="541" y="474" width="317.5" height="198" fill="#000" filter="url(#ds)" opacity="0.28"/>
</g>
<rect x="540.5" y="471.5" width="316" height="196" fill="#f0f0f0" stroke="#808080" stroke-width="1" />
<rect x="541" y="472" width="315" height="30" fill="#ffffff" />
<defs><linearGradient id="fs" x1="0" y1="0" x2="1" y2="0"><stop offset="0" stop-color="#000" stop-opacity="0.06"/><stop offset="1" stop-color="#000" stop-opacity="0"/></linearGradient></defs>
<rect x="862" y="468" width="12" height="208" fill="url(#fs)" />
<rect x="535.5" y="464.5" width="326" height="214" fill="none" stroke="#000" stroke-width="3" rx="4" />
<text x="549.02" y="491" font-size="12.6" fill="#000000" textLength="90.39" lengthAdjust="spacingAndGlyphs" >Create Sparklines</text>
<text x="784.44" y="491.5" font-size="13.5" fill="#000000" textLength="7.56" lengthAdjust="spacingAndGlyphs" >?</text>
<path d="M828 481l10 10 M838 481l-10 10" stroke="#000" fill="none" stroke-width="1.1" />
<text x="547.8" y="519.9" font-size="11.4" fill="#000000" textLength="160.19" lengthAdjust="spacingAndGlyphs" >Choose the data that you want</text>
<rect x="713" y="515" width="137" height="1" fill="#dcdcdc" />
<text x="556.46" y="543.5" font-size="11.4" fill="#000000" textLength="64.39" lengthAdjust="spacingAndGlyphs" >Data Range:</text>
<rect x="557.2" y="545" width="7.7999999999999545" height="1" fill="#000" />
<rect x="630.5" y="529.5" width="198" height="20" fill="#ffffff" stroke="#abadb3" stroke-width="1" />
<text x="634.18" y="543.5" font-size="11.4" fill="#000000" textLength="28.15" lengthAdjust="spacingAndGlyphs" >A3:F7</text>
<rect x="828.6" y="529.6" width="20.8" height="19.8" fill="#e1e1e1" stroke="#abadb3" stroke-width="1.3" />
<rect x="830.5" y="532.5" width="16" height="14" fill="#ffffff" />
<path d="M838 534l4.2 5h-3.2v2.8h-2v-2.8h-3.2z" fill="#000" />
<rect x="834" y="543" width="8.2" height="1.4" fill="#000" />
<text x="547.81" y="583.8" font-size="11.4" fill="#000000" textLength="267.55" lengthAdjust="spacingAndGlyphs" >Choose where you want the sparklines to be placed</text>
<rect x="820" y="579" width="30" height="1" fill="#dcdcdc" />
<text x="556.45" y="607.6" font-size="11.4" fill="#000000" textLength="84.2" lengthAdjust="spacingAndGlyphs" >Location Range:</text>
<rect x="557.2" y="609" width="5.7999999999999545" height="1" fill="#000" />
<rect x="650.5" y="593.5" width="178" height="20" fill="#ffffff" stroke="#abadb3" stroke-width="1" />
<rect x="828.6" y="593.6" width="20.8" height="19.8" fill="#e1e1e1" stroke="#abadb3" stroke-width="1.3" />
<rect x="830.5" y="596.5" width="16" height="14" fill="#ffffff" />
<path d="M838 598l4.2 5h-3.2v2.8h-2v-2.8h-3.2z" fill="#000" />
<rect x="834" y="607" width="8.2" height="1.4" fill="#000" />
<rect x="693" y="639" width="71" height="19" fill="#e1e1e1" stroke="#0078d7" stroke-width="2" />
<text x="721.04" y="652.9" font-size="11.4" fill="#000000" textLength="14.07" lengthAdjust="spacingAndGlyphs" >OK</text>
<rect x="776.5" y="638.5" width="72" height="20" fill="#e1e1e1" stroke="#adadad" stroke-width="1" />
<text x="794.73" y="652.9" font-size="11.4" fill="#000000" textLength="34.92" lengthAdjust="spacingAndGlyphs" >Cancel</text>
<rect x="852.2" y="663" width="1.7" height="1.7" fill="#bfbfbf" />
<rect x="849.2" y="663" width="1.7" height="1.7" fill="#bfbfbf" />
<rect x="852.2" y="660" width="1.7" height="1.7" fill="#bfbfbf" />
<rect x="846.2" y="663" width="1.7" height="1.7" fill="#bfbfbf" />
<rect x="849.2" y="660" width="1.7" height="1.7" fill="#bfbfbf" />
<rect x="852.2" y="657" width="1.7" height="1.7" fill="#bfbfbf" />
<text x="68.52" y="587.3" font-size="21" fill="#000" font-weight="700" textLength="299.24" lengthAdjust="spacingAndGlyphs" >Create Sparklines Dialog Box</text>
<text x="970.34" y="542.8" font-size="21" fill="#000" font-weight="700" textLength="128.56" lengthAdjust="spacingAndGlyphs" >Data Range</text>
<text x="972.35" y="607.8" font-size="21" fill="#000" font-weight="700" textLength="173.64" lengthAdjust="spacingAndGlyphs" >Location Range</text>
<rect x="375.3" y="582.9" width="145.09999999999997" height="3" fill="#000" />
<path d="M534.4 584.4l-17.5 -6 2.5 6 -2.5 6z" fill="#000" />
<rect x="862.8" y="536.0" width="105.70000000000005" height="3" fill="#000" />
<path d="M848.8 537.5l17.5 -6 -2.5 6 2.5 6z" fill="#000" />
<rect x="776.9" y="602.1" width="191.80000000000007" height="3" fill="#000" />
<path d="M762.9 603.6l17.5 -6 -2.5 6 2.5 6z" fill="#000" />
<rect x="0" y="0" width="1207" height="1" fill="#858585" />
<rect x="0" y="0" width="1" height="728" fill="#6e6e6e" />
<rect x="1205.7" y="0" width="1.3" height="728" fill="#8c8c8c" />
<rect x="0" y="726.7" width="1207" height="1.3" fill="#858585" />
</svg>
</body></html>
